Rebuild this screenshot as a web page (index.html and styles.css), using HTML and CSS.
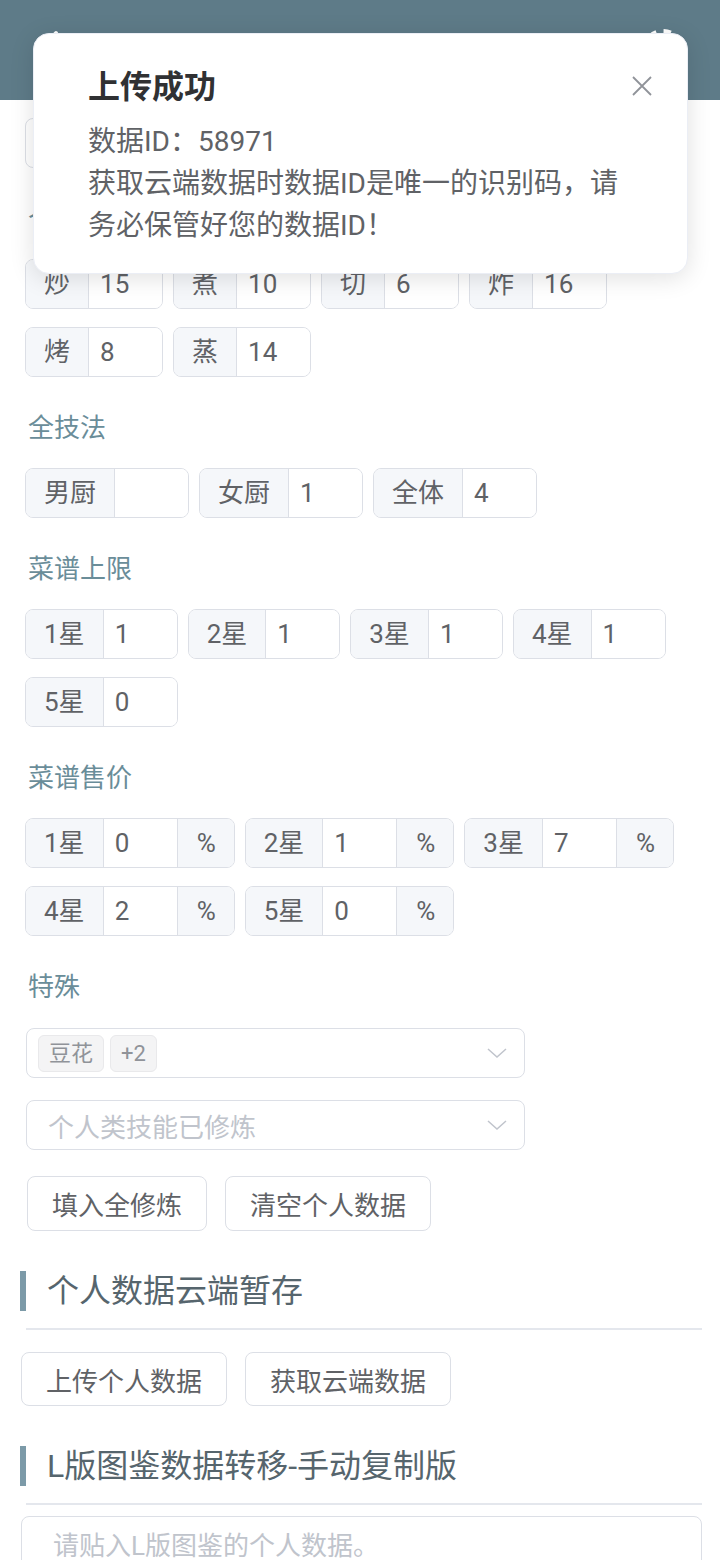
FILE: index.html
```html
<!DOCTYPE html>
<html lang="zh-CN">
<head>
    <meta charset="UTF-8">
    <meta name="viewport" content="width=device-width, initial-scale=1.0">
    <title>个人数据</title>
    <link rel="stylesheet" href="styles.css">
</head>
<body>
    <div id="header">
        <div class="header-icon">
            <svg viewBox="0 0 40 40" width="40" height="40"><path d="M26 3 L11 20 L26 37" fill="none" stroke="#fff" stroke-width="4" stroke-linecap="round" stroke-linejoin="round"/></svg>
        </div>
        <div class="header-icon">
            <svg viewBox="0 0 44 44" width="44" height="44">
                <circle cx="22" cy="22" r="17" fill="none" stroke="#fff" stroke-width="8" stroke-dasharray="6.7 6.65"/>
                <circle cx="22" cy="22" r="13" fill="none" stroke="#fff" stroke-width="4"/>
                <circle cx="22" cy="22" r="5" fill="none" stroke="#fff" stroke-width="3"/>
            </svg>
        </div>
    </div>

    <div id="main">
        <div class="form">
            <div class="select first"></div>

            <div class="field-title">个人技法</div>
            <div class="group-row">
                <div class="input-group"><span class="label">炒</span><input type="text" value="15"></div>
                <div class="input-group"><span class="label">煮</span><input type="text" value="10"></div>
                <div class="input-group"><span class="label">切</span><input type="text" value="6"></div>
                <div class="input-group"><span class="label">炸</span><input type="text" value="16"></div>
                <div class="input-group"><span class="label">烤</span><input type="text" value="8"></div>
                <div class="input-group"><span class="label">蒸</span><input type="text" value="14"></div>
            </div>

            <div class="field-title">全技法</div>
            <div class="group-row">
                <div class="input-group"><span class="label">男厨</span><input type="text" value=""></div>
                <div class="input-group"><span class="label">女厨</span><input type="text" value="1"></div>
                <div class="input-group"><span class="label">全体</span><input type="text" value="4"></div>
            </div>

            <div class="field-title">菜谱上限</div>
            <div class="group-row">
                <div class="input-group"><span class="label">1星</span><input type="text" value="1"></div>
                <div class="input-group"><span class="label">2星</span><input type="text" value="1"></div>
                <div class="input-group"><span class="label">3星</span><input type="text" value="1"></div>
                <div class="input-group"><span class="label">4星</span><input type="text" value="1"></div>
                <div class="input-group"><span class="label">5星</span><input type="text" value="0"></div>
            </div>

            <div class="field-title">菜谱售价</div>
            <div class="group-row">
                <div class="input-group"><span class="label">1星</span><input type="text" value="0"><span class="unit">%</span></div>
                <div class="input-group"><span class="label">2星</span><input type="text" value="1"><span class="unit">%</span></div>
                <div class="input-group"><span class="label">3星</span><input type="text" value="7"><span class="unit">%</span></div>
                <div class="input-group"><span class="label">4星</span><input type="text" value="2"><span class="unit">%</span></div>
                <div class="input-group"><span class="label">5星</span><input type="text" value="0"><span class="unit">%</span></div>
            </div>

            <div class="field-title">特殊</div>
            <div class="special">
                <div class="select">
                    <span class="tag">豆花</span>
                    <span class="tag">+2</span>
                    <svg class="arrow" viewBox="0 0 20 10" width="20" height="10"><path d="M1 1 L10 9 L19 1" fill="none" stroke="#c0c4cc" stroke-width="1.5"/></svg>
                </div>
                <div class="select empty">
                    <span class="placeholder">个人类技能已修炼</span>
                    <svg class="arrow" viewBox="0 0 20 10" width="20" height="10"><path d="M1 1 L10 9 L19 1" fill="none" stroke="#c0c4cc" stroke-width="1.5"/></svg>
                </div>
            </div>

            <div class="actions">
                <button class="btn">填入全修炼</button>
                <button class="btn">清空个人数据</button>
            </div>
        </div>

        <div class="section-title">个人数据云端暂存</div>
        <div class="divider"></div>
        <div class="section-actions">
            <button class="btn">上传个人数据</button>
            <button class="btn">获取云端数据</button>
        </div>

        <div class="section-title">L版图鉴数据转移-手动复制版</div>
        <div class="divider"></div>
        <textarea class="paste-box" placeholder="请贴入L版图鉴的个人数据。"></textarea>
    </div>

    <div class="notification">
        <div class="notification-title">上传成功</div>
        <div class="notification-content">
            <p>数据ID：58971</p>
            <p>获取云端数据时数据ID是唯一的识别码，请务必保管好您的数据ID！</p>
        </div>
        <div class="notification-close">
            <svg viewBox="0 0 20 20" width="20" height="20"><path d="M1 1 L19 19 M19 1 L1 19" stroke="#909399" stroke-width="1.8"/></svg>
        </div>
    </div>
</body>
</html>
```

FILE: styles.css
```css
body {
    margin: 0;
    font-family: Roboto, "Noto Sans CJK SC", sans-serif;
    color: #606266;
    background-color: #fff;
}

#header {
    height: 100px;
    background-color: #5e7b88;
    display: flex;
    justify-content: space-between;
    align-items: center;
    padding: 0 35px 0 30px;
    box-sizing: border-box;
}

.header-icon svg {
    display: block;
}

#main {
    padding: 18px 18px 40px 20px;
}

.form {
    padding-left: 5px;
}

.select {
    width: 499px;
    height: 50px;
    box-sizing: border-box;
    border: 1px solid #dcdfe6;
    border-radius: 8px;
    display: flex;
    align-items: center;
    padding: 0 17px 0 11px;
    margin-left: 1px;
    background-color: #fff;
}

.select.first {
    margin-left: 0;
}

.select.empty {
    padding-left: 21px;
    margin-top: 22px;
}

.select .arrow {
    margin-left: auto;
}

.placeholder {
    font-size: 26px;
    color: #c0c4cc;
}

.tag {
    height: 37px;
    line-height: 35px;
    box-sizing: border-box;
    padding: 0 10px;
    margin-right: 6px;
    font-size: 22px;
    color: #909399;
    background-color: #f4f4f5;
    border: 1px solid #e9e9eb;
    border-radius: 6px;
}

.field-title {
    font-size: 26px;
    line-height: 36px;
    color: #6a8d99;
    margin: 33px 0 22px 3px;
}

.special {
    padding-top: 1px;
}

.group-row {
    display: flex;
    flex-wrap: wrap;
    gap: 18px 10px;
}

.input-group {
    display: flex;
    height: 50px;
    box-sizing: border-box;
    border: 1px solid #dcdfe6;
    border-radius: 8px;
    overflow: hidden;
    font-size: 26px;
}

.input-group .label,
.input-group .unit {
    background-color: #f5f7fa;
    padding: 0 18px;
    line-height: 48px;
}

.input-group .label {
    border-right: 1px solid #dcdfe6;
}

.input-group .unit {
    padding: 0 18px 0 19px;
    border-left: 1px solid #dcdfe6;
}

.input-group input {
    width: 73px;
    height: 48px;
    box-sizing: border-box;
    border: none;
    padding: 0 11px;
    font: inherit;
    color: #606266;
    background-color: #fff;
    outline: none;
}

.actions {
    display: flex;
    gap: 18px;
    margin: 26px 0 0 2px;
}

.btn {
    height: 55px;
    padding: 0 24px;
    font-family: inherit;
    font-size: 26px;
    color: #606266;
    background-color: #fff;
    border: 1px solid #dcdfe6;
    border-radius: 8px;
    cursor: pointer;
}

.section-title {
    margin-top: 40px;
    height: 40px;
    line-height: 40px;
    border-left: 6px solid #7c9aa8;
    padding-left: 21px;
    font-size: 32px;
    color: #56656d;
}

.divider {
    margin: 17px 0 0 6px;
    border-top: 2px solid #e4e7ed;
}

.section-actions {
    display: flex;
    gap: 18px;
    margin: 22px 0 0 1px;
}

.section-actions .btn {
    height: 54px;
}

.paste-box {
    display: block;
    margin: 11px 0 0 1px;
    width: calc(100% - 1px);
    height: 140px;
    box-sizing: border-box;
    padding: 9px 31px;
    font-family: inherit;
    font-size: 26px;
    line-height: 40px;
    color: #606266;
    border: 1px solid #dcdfe6;
    border-radius: 8px;
    resize: none;
    outline: none;
}

.paste-box::placeholder {
    color: #c0c4cc;
}

.notification {
    position: absolute;
    top: 33px;
    left: 33px;
    width: 655px;
    box-sizing: border-box;
    padding: 29px 54px 26px 54px;
    background-color: #fff;
    border: 1px solid #ebeef5;
    border-radius: 16px;
    box-shadow: 0 4px 24px rgba(0, 0, 0, 0.12);
}

.notification-title {
    font-size: 32px;
    font-weight: bold;
    line-height: 48px;
    color: #303133;
}

.notification-content {
    margin-top: 10px;
    font-size: 28px;
    line-height: 42px;
    color: #606266;
}

.notification-content p {
    margin: 0;
}

.notification-close {
    position: absolute;
    top: 42px;
    right: 35px;
    width: 20px;
    height: 20px;
}

.notification-close svg {
    display: block;
}
```
